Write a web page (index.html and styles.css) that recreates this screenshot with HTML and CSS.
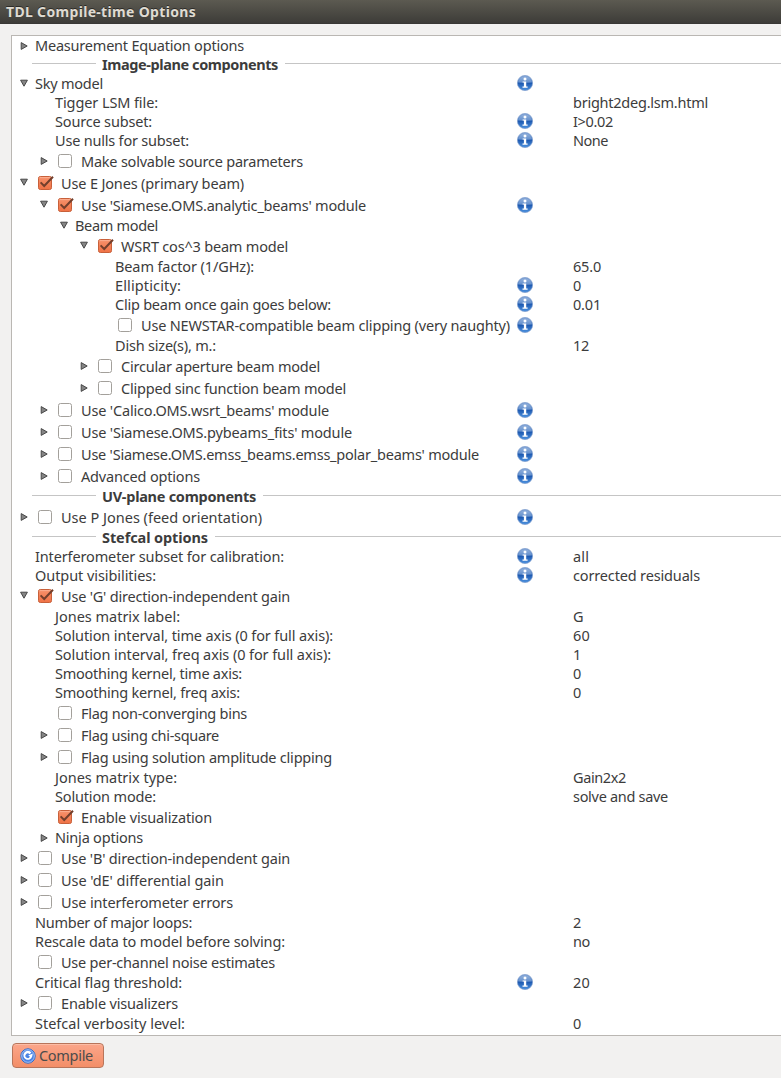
FILE: index.html
```html
<!DOCTYPE html>
<html lang="en">
<head>
<meta charset="utf-8">
<title>TDL Compile-time Options</title>
<link rel="stylesheet" href="styles.css">
</head>
<body>
<svg class="defs" width="0" height="0" aria-hidden="true">
  <defs>
    <linearGradient id="blue" x1="0" y1="0" x2="0" y2="1"><stop offset="0" stop-color="#88a9d8"/><stop offset=".42" stop-color="#4c7fc6"/><stop offset=".5" stop-color="#1c58b0"/><stop offset="1" stop-color="#4f94e0"/></linearGradient>
    <linearGradient id="orange" x1="0" y1="0" x2="0" y2="1"><stop offset="0" stop-color="#f7926c"/><stop offset="1" stop-color="#f07245"/></linearGradient>
    <symbol id="info" viewBox="0 0 16 16"><circle cx="8" cy="8" r="7.6" fill="url(#blue)" stroke="#7b9bcb" stroke-width=".7"/><path d="M1.2 7.5A6.9 6.9 0 0 1 14.8 7.5Q8 9 1.2 7.5Z" fill="#fff" opacity=".16"/><circle cx="8" cy="3.9" r="1.5" fill="#fff"/><path d="M5.6 6.4H9.2V11.6H10.6V12.8H5.5V11.6H6.9V7.6H5.6Z" fill="#fff"/></symbol>
    <symbol id="on" viewBox="0 0 17 16"><rect x="1.5" y="1.5" width="13" height="13" rx="1.8" fill="url(#orange)" stroke="#c8603a"/><path d="M2.5 2.6H13.5" stroke="#fbb59b" stroke-width=".8"/><path d="M3.6 7.4L7.2 11L16 1.8" fill="none" stroke="#733f2c" stroke-width="2"/></symbol>
    <symbol id="off" viewBox="0 0 17 16"><rect x="1.5" y="1.5" width="13" height="13" rx="2" fill="#fff" stroke="#a3a09b"/></symbol>
    <symbol id="open" viewBox="0 0 8 8"><path d="M.6 1.2H7.4L4 7.2Z" fill="#858585" stroke="#484848"/></symbol>
    <symbol id="closed" viewBox="0 0 8 8"><path d="M1.2 .6V7.4L7.2 4Z" fill="#858585" stroke="#484848"/></symbol>
  </defs>
</svg>
<header class="titlebar"><span class="fit" data-width="190">TDL Compile-time Options</span></header>
<main class="tree" id="tree"></main>
<footer class="actions">
  <button class="compile">
    <svg class="compile-icon" viewBox="0 0 16 16"><circle cx="8" cy="8" r="7.2" fill="#4a83e4" stroke="#326dcc"/><circle cx="8" cy="8" r="6.3" fill="none" stroke="#b9d0f8" stroke-width=".8"/><path d="M11.4 4.5A4.5 4.5 0 1 0 12.2 8.5L12.8 5.6L8.2 7.5L9.9 8.6A2.3 2.3 0 1 1 9.5 6.2Z" fill="#fff"/></svg>
    <span class="fit" data-width="54">Compile</span>
  </button>
</footer>
<script src="tree.js"></script>
</body>
</html>
```
FILE: styles.css
```css
body { margin: 0; width: 781px; height: 1078px; overflow: hidden; background: #f2f1f0; color: #3c3c3c; font: 14.5px/17px "Noto Sans", "Open Sans", sans-serif; }
.defs { display: block; }
.titlebar { box-sizing: border-box; height: 24px; padding: 3px 0 0 6px; background: linear-gradient(#5c5a51, #3d3c38); border-bottom: 1px solid #393835; color: #dfdbd2; font-weight: 700; font-size: 14px; line-height: 17px; text-shadow: 0 -1px #2c2b28; }
.fit { display: inline-block; white-space: pre; }
.tree { box-sizing: border-box; height: 1001px; margin: 11px 0 0 11px; padding-top: 1px; background: #fff; border: 1px solid #bab7b3; border-right: 0; }
.row { display: grid; grid-template-columns: 505px 56px 1fr; height: 19px; }
.row.checkable { height: 22px; }
.name { display: flex; align-items: flex-start; white-space: nowrap; }
.level-1 { padding-left: 20px; }
.level-2 { padding-left: 40px; }
.level-3 { padding-left: 60px; }
.level-4 { padding-left: 80px; }
.arrow { flex: none; width: 8px; height: 8px; margin: 5px 7px 0 8px; }
.arrow.open { margin-top: 4px; }
.spacer { flex: none; width: 23px; }
.checkable .arrow { margin-top: 6px; }
.checkable .arrow.open { margin-top: 5px; }
.check { flex: none; width: 17px; height: 16px; margin: 2px 7px 0 2px; }
.checkable .fit { margin-top: 2px; }
.info { display: block; width: 16px; height: 16px; }
.checkable .info { margin-top: 2px; }
.section { display: flex; height: 19px; margin-left: 20px; font-weight: 700; }
.section::before { content: ""; width: 64px; height: 1px; margin: 7px 6px 0 0; background: #c5c5c5; }
.section::after { content: ""; flex: 1; height: 1px; margin: 7px 0 0 7px; background: #c5c5c5; }
.actions { padding: 7px 0 0 12px; }
.compile { box-sizing: border-box; display: flex; align-items: center; gap: 3px; width: 92px; height: 25px; padding: 0 0 0 7px; border: 1px solid #b8755b; border-radius: 4px; background: linear-gradient(#fba68a, #f38e68); box-shadow: inset 0 1px #fcbda6; color: #4c4c4c; font: inherit; }
.compile-icon { width: 16px; height: 16px; }
```
FILE: tree.js
```javascript
// [level, arrow (o = open, c = closed, - = none), checkbox (1, 0, -), label, label width, info, value, value width]
const rows = [
  [0,'c','-','Measurement Equation options',209],
  ['Image-plane components',176],
  [0,'o','-','Sky model',68,1],
  [1,'-','-','Tigger LSM file:',103,0,'bright2deg.lsm.html',135],
  [1,'-','-','Source subset:',97,1,'I>0.02',40],
  [1,'-','-','Use nulls for subset:',134,1,'None',35],
  [1,'c',0,'Make solvable source parameters',222],
  [0,'o',1,'Use E Jones (primary beam)',183],
  [1,'o',1,"Use 'Siamese.OMS.analytic_beams' module",285,1],
  [2,'o','-','Beam model',83],
  [3,'o',1,'WSRT cos^3 beam model',167],
  [4,'-','-','Beam factor (1/GHz):',139,0,'65.0',28],
  [4,'-','-','Ellipticity:',66,1,'0',8],
  [4,'-','-','Clip beam once gain goes below:',216,1,'0.01',28],
  [4,'-',0,'Use NEWSTAR-compatible beam clipping (very naughty)',369,1],
  [4,'-','-','Dish size(s), m.:',101,0,'12',16],
  [3,'c',0,'Circular aperture beam model',199],
  [3,'c',0,'Clipped sinc function beam model',225],
  [1,'c',0,"Use 'Calico.OMS.wsrt_beams' module",248,1],
  [1,'c',0,"Use 'Siamese.OMS.pybeams_fits' module",271,1],
  [1,'c',0,"Use 'Siamese.OMS.emss_beams.emss_polar_beams' module",398,1],
  [1,'c',0,'Advanced options',119,1],
  ['UV-plane components',154],
  [0,'c',0,'Use P Jones (feed orientation)',201,1],
  ['Stefcal options',106],
  [0,'-','-','Interferometer subset for calibration:',249,1,'all',16],
  [0,'-','-','Output visibilities:',121,1,'corrected residuals',127],
  [0,'o',1,"Use 'G' direction-independent gain",229],
  [1,'-','-','Jones matrix label:',125,0,'G',10],
  [1,'-','-','Solution interval, time axis (0 for full axis):',278,0,'60',17],
  [1,'-','-','Solution interval, freq axis (0 for full axis):',276,0,'1',8],
  [1,'-','-','Smoothing kernel, time axis:',187,0,'0',8],
  [1,'-','-','Smoothing kernel, freq axis:',185,0,'0',8],
  [1,'-',0,'Flag non-converging bins',166],
  [1,'c',0,'Flag using chi-square',138],
  [1,'c',0,'Flag using solution amplitude clipping',251],
  [1,'-','-','Jones matrix type:',122,0,'Gain2x2',53],
  [1,'-','-','Solution mode:',101,0,'solve and save',95],
  [1,'-',1,'Enable visualization',131],
  [1,'c','-','Ninja options',88],
  [0,'c',0,"Use 'B' direction-independent gain",229],
  [0,'c',0,"Use 'dE' differential gain",163],
  [0,'c',0,'Use interferometer errors',172],
  [0,'-','-','Number of major loops:',157,0,'2',8],
  [0,'-','-','Rescale data to model before solving:',250,0,'no',17],
  [0,'-',0,'Use per-channel noise estimates',214],
  [0,'-','-','Critical flag threshold:',147,1,'20',17],
  [0,'c',0,'Enable visualizers',117],
  [0,'-','-','Stefcal verbosity level:',150,0,'0',8]
];

const icon = (id, cls) => `<svg class="${cls}"><use href="#${id}"/></svg>`;
const text = (s, w) => `<span class="fit" data-width="${w}">${s}</span>`;

document.getElementById('tree').innerHTML = rows.map(r => {
  if (r.length === 2) return `<div class="section">${text(r[0], r[1])}</div>`;
  const [level, arrow, check, label, width, info, value, valueWidth] = r;
  const mark = arrow === 'o' ? icon('open', 'arrow open') : arrow === 'c' ? icon('closed', 'arrow') : '<span class="spacer"></span>';
  const box = check === '-' ? '' : icon(check ? 'on' : 'off', 'check');
  return `<div class="row${box ? ' checkable' : ''}"><div class="name level-${level}">${mark}${box}${text(label, width)}</div>` +
    `<div>${info ? icon('info', 'info') : ''}</div><div>${value ? text(value, valueWidth) : ''}</div></div>`;
}).join('');

document.querySelectorAll('.fit').forEach(el => {
  const extra = el.dataset.width - el.getBoundingClientRect().width;
  el.style.letterSpacing = extra / el.textContent.length + 'px';
});
```
